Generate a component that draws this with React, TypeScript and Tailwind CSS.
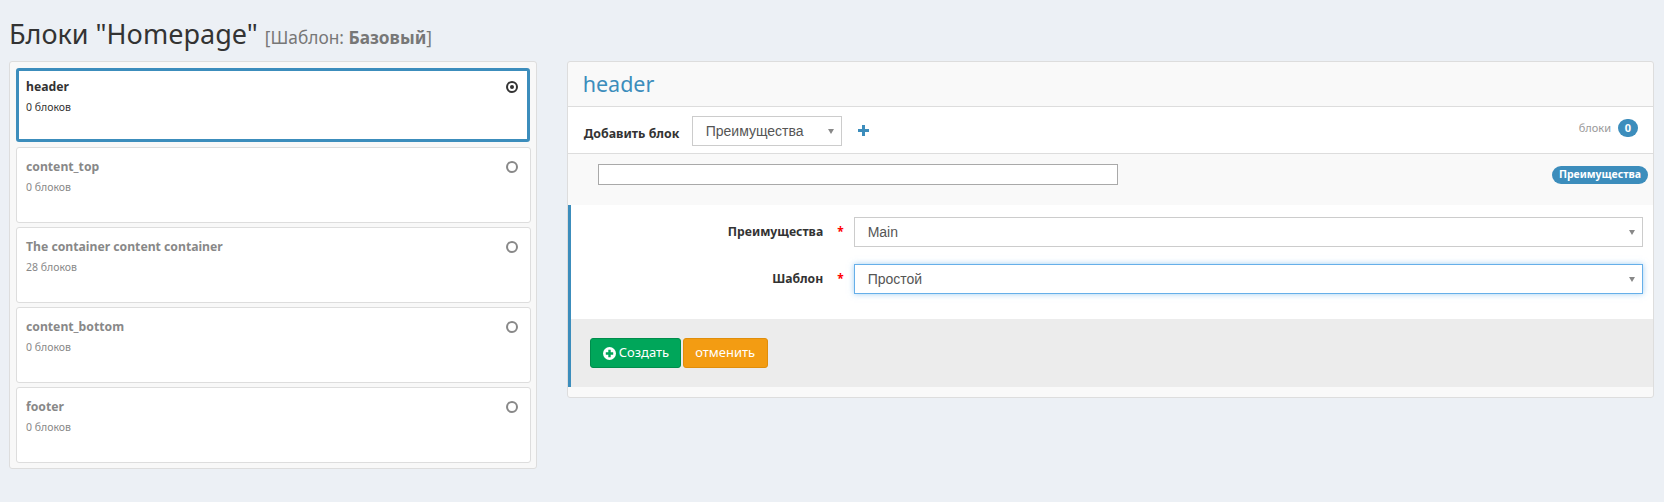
const sections = [
  { name: "header", count: "0 блоков", active: true },
  { name: "content_top", count: "0 блоков" },
  { name: "The container content container", count: "28 блоков" },
  { name: "content_bottom", count: "0 блоков" },
  { name: "footer", count: "0 блоков" },
];

function Arrow() {
  return (
    <svg width="6" height="5" viewBox="0 0 6 5" className="shrink-0">
      <path d="M0 0h6L3 5z" fill="#888888" />
    </svg>
  );
}

function SectionCard({ name, count, active }: { name: string; count: string; active?: boolean }) {
  return (
    <div
      className={
        active
          ? "mb-[1px] mr-[1px] h-[74px] rounded-[3px] border-[3px] border-[#3c8dbc] bg-white pl-[7px] pr-[9px] pt-[6px] text-[#333333]"
          : "h-[76px] rounded-[3px] border border-[#dddddd] bg-white pl-[9px] pr-[12px] pt-[9px] text-[#888888]"
      }
    >
      <div className="flex items-center justify-between">
        <span className="text-[12.2px] font-bold leading-[20px]">{name}</span>
        <span
          className={
            active
              ? "flex size-[12px] items-center justify-center rounded-full border-2 border-[#333333]"
              : "size-[12px] rounded-full border-2 border-[#888888]"
          }
        >
          {active && <span className="size-[4px] rounded-full bg-[#333333]" />}
        </span>
      </div>
      <div className="text-[10.5px] leading-[20px]">{count}</div>
    </div>
  );
}

function FormRow({ label, value, focused }: { label: string; value: string; focused?: boolean }) {
  return (
    <div className="flex items-center">
      <div className="flex w-[283px] items-center justify-end">
        <span className="text-[12.2px] font-bold leading-[20px] text-[#333333]">{label}</span>
        <span className="ml-[14px] mr-[10px] text-[12px] font-bold leading-[20px] text-[#ff0000]">*</span>
      </div>
      <div
        className={
          focused
            ? "flex h-[30px] flex-1 items-center justify-between border border-[#66afe9] pl-[13px] pr-[7px] shadow-[0_0_6px_rgba(102,175,233,0.6)]"
            : "flex h-[30px] flex-1 items-center justify-between border border-[#cccccc] pl-[13px] pr-[7px]"
        }
      >
        <span className="font-['Liberation_Sans',sans-serif] text-[14px] text-[#555555]">{value}</span>
        <Arrow />
      </div>
    </div>
  );
}

export default function App() {
  return (
    <div className="h-[502px] w-[1664px] overflow-hidden bg-[#ecf0f5] pl-[9px] pr-[10px] pt-[18px] font-['Noto_Sans',sans-serif]">
      <h1 className="h-[43px] whitespace-nowrap text-[27px] leading-[32px] text-[#333333]">
        Блоки "Homepage"{" "}
        <span className="text-[17.3px] text-[#777777]">
          [Шаблон: <b>Базовый</b>]
        </span>
      </h1>
      <div className="flex items-start gap-[30px]">
        <div className="flex w-[528px] flex-col gap-[4px] rounded-[3px] border border-[#dddddd] bg-[#f8f8f8] pb-[5px] pl-[6px] pr-[5px] pt-[6px]">
          {sections.map((s) => (
            <SectionCard key={s.name} {...s} />
          ))}
        </div>

        <div className="w-[1088px] rounded-[3px] border border-[#dddddd] bg-[#f9f9f9]">
          <div className="h-[45px] border-b border-[#dddddd] pl-[15px] pt-[7px] text-[21.5px] leading-[30px] text-[#3c8dbc]">
            header
          </div>
          <div className="flex h-[47px] items-start border-b border-[#dddddd] bg-white pl-[15px] pr-[15px] pt-[9px]">
            <span className="ml-[1px] mt-[9px] w-[108px] text-[12.4px] font-bold leading-[18px] text-[#333333]">Добавить блок</span>
            <div className="flex h-[30px] w-[150px] items-center justify-between border border-[#cccccc] pl-[13px] pr-[7px]">
              <span className="font-['Liberation_Sans',sans-serif] text-[14px] text-[#555555]">Преимущества</span>
              <Arrow />
            </div>
            <svg width="11" height="11" viewBox="0 0 11 11" className="ml-[16px] mt-[9px]">
              <path d="M4 0h3v4h4v3H7v4H4V7H0V4h4z" fill="#3c8dbc" />
            </svg>
            <span className="ml-auto mr-[7px] mt-[3px] text-[11px] leading-[18px] text-[#999999]">блоки</span>
            <span className="mt-[3px] flex h-[18px] w-[20px] items-center justify-center rounded-full bg-[#3c8dbc] text-[11px] font-bold text-white">
              0
            </span>
          </div>
          <div className="flex h-[51px] items-start pl-[30px] pr-[5px] pt-[10px]">
            <div className="h-[21px] w-[520px] border border-[#a9a9a9] bg-white" />
            <span className="ml-auto mt-[2px] flex h-[18px] w-[96px] items-center justify-center rounded-full bg-[#3c8dbc] text-[10.5px] font-bold text-white">
              Преимущества
            </span>
          </div>
          <div className="border-l-[3px] border-[#3c8dbc] bg-white">
            <div className="flex h-[114px] flex-col gap-[17px] pr-[10px] pt-[12px]">
              <FormRow label="Преимущества" value="Main" />
              <FormRow label="Шаблон" value="Простой" focused />
            </div>
            <div className="flex h-[68px] items-start gap-[2px] bg-[#ececec] pl-[19px] pt-[19px]">
              <button className="flex h-[30px] w-[91px] items-center gap-[3px] rounded-[3px] border border-[#008d4c] bg-[#00a65a] pl-[12px] text-[13px] text-white">
                <svg width="13" height="13" viewBox="0 0 13 13">
                  <circle cx="6.5" cy="6.5" r="6.5" fill="#ffffff" />
                  <path d="M5.3 2.8h2.4v2.5h2.5v2.4H7.700v2.500H5.300V7.700H2.800V5.300h2.500z" fill="#00a65a" />
                </svg>
                Создать
              </button>
              <button className="h-[30px] w-[85px] rounded-[3px] border border-[#e08e0b] bg-[#f39c12] text-[13px] text-white">
                отменить
              </button>
            </div>
          </div>
          <div className="h-[10px]" />
        </div>
      </div>
    </div>
  );
}
